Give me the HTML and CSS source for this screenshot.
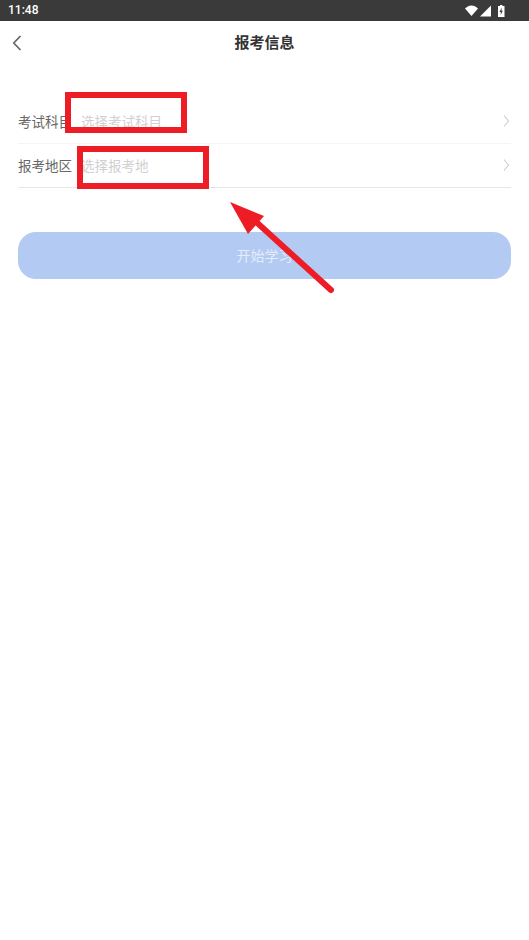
FILE: index.html
```html
<!DOCTYPE html>
<html lang="zh">
<head>
<meta charset="utf-8">
<title>报考信息</title>
<link rel="stylesheet" href="styles.css">
</head>
<body>
<div class="phone">
  <div class="status">
    <span class="time">11:48</span>
    <svg class="status-icons" width="40" height="14" viewBox="0 0 40 14">
      <path d="M0 4.500C4 .5 9 .5 13 4.500L6.500 12Z" fill="#fff"/>
      <path d="M26 1.500V12.500H15Z" fill="#fff"/>
      <path d="M33 2H35V1H37.500V2H39.500V13H33Z" fill="#fff"/>
      <path d="M36.700 3.500L34.500 8H35.900L35.600 11L37.800 6.800H36.500Z" fill="#3a3a3a"/>
    </svg>
  </div>
  <header class="nav">
    <svg class="back" width="10" height="16" viewBox="0 0 10 16"><path d="M8.500 1L1.800 8L8.500 15" fill="none" stroke="#666" stroke-width="1.700"/></svg>
    <h1 class="title">报考信息</h1>
  </header>
  <main class="form">
    <div class="row">
      <span class="label">考试科目</span>
      <span class="value">选择考试科目</span>
      <svg class="chev" width="7" height="12" viewBox="0 0 7 12"><path d="M1 .5L5.500 6L1 11.500" fill="none" stroke="#ccc" stroke-width="1.100"/></svg>
    </div>
    <div class="row row-strong">
      <span class="label">报考地区</span>
      <span class="value">选择报考地</span>
      <svg class="chev" width="7" height="12" viewBox="0 0 7 12"><path d="M1 .5L5.500 6L1 11.500" fill="none" stroke="#ccc" stroke-width="1.100"/></svg>
    </div>
    <button class="start" type="button">开始学习</button>
  </main>
  <div class="mark mark-one"></div>
  <div class="mark mark-two"></div>
  <svg class="arrow" width="110" height="100" viewBox="0 0 110 100">
    <path d="M101 88L24 18" fill="none" stroke="#ee1c25" stroke-width="6" stroke-linecap="round"/>
    <path d="M0 0L34 14L18 32Z" fill="#ee1c25"/>
  </svg>
</div>
</body>
</html>
```
FILE: styles.css
```css
* { box-sizing: border-box; }
html, body { margin: 0; padding: 0; background: #fff; }
body { font-family: "Noto Sans CJK SC", "Noto Sans", sans-serif; }
.phone { position: relative; width: 529px; height: 940px; overflow: hidden; background: #fff; }
.status {
  height: 21px; background: #3a3a3a; color: #fff;
  display: flex; align-items: center; justify-content: space-between;
  padding: 0 24px 0 8px;
}
.time { font-family: Roboto, sans-serif; font-size: 12px; font-weight: 500; line-height: 21px; }
.status-icons { display: block; }
.nav { position: relative; height: 43px; padding-bottom: 2px; display: flex; align-items: center; justify-content: center; }
.back { position: absolute; left: 12px; top: 14px; }
.title { margin: 0; font-size: 15px; font-weight: 700; color: #333; line-height: 41px; }
.form { padding: 36px 18px 0; }
.row {
  height: 44px; padding-bottom: 2px; display: flex; align-items: center;
  border-bottom: 1px solid #f4f4f4; font-size: 13.500px;
}
.row-strong { border-bottom-color: #e6e6e6; }
.label { width: 63px; color: #666; line-height: 20px; }
.value { flex: 1; color: #d0d0d0; line-height: 20px; }
.chev { display: block; margin-right: 1px; }
.start {
  display: block; width: 493px; height: 47px; margin-top: 44px;
  border: 0; border-radius: 18px; background: #b3cbf2; color: #e4ecfa;
  font-family: inherit; font-size: 14px; padding: 0 0 2px;
}
.mark { position: absolute; border: 6px solid #ee1c25; }
.mark-one { left: 65px; top: 92px; width: 122px; height: 41px; }
.mark-two { left: 77px; top: 146px; width: 132px; height: 43px; }
.arrow { position: absolute; left: 230px; top: 202px; }
```
